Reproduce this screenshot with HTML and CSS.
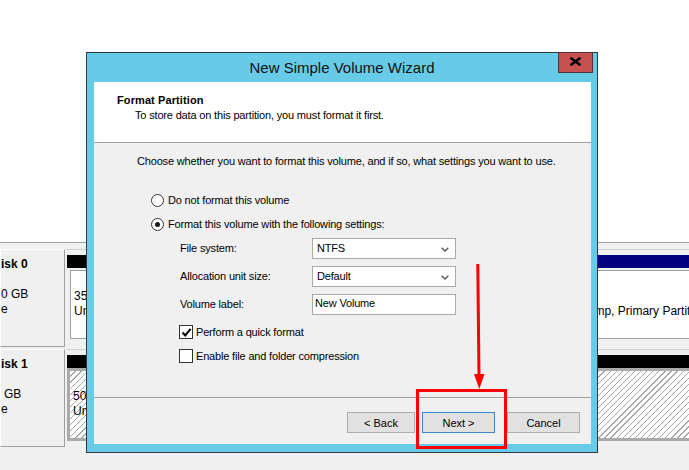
FILE: index.html
```html
<!DOCTYPE html>
<html>
<head>
<meta charset="utf-8">
<title>New Simple Volume Wizard</title>
<link rel="stylesheet" href="styles.css">
</head>
<body>
<div class="desk">
  <div class="vol-pane"></div>
  <div class="disk-pane">
    <div class="disk-row">
      <div class="disk-label">
        <div class="dl-name">isk 0</div>
        <div class="dl-line"></div>
        <div class="dl-line">0 GB</div>
        <div class="dl-line">e</div>
      </div>
      <div class="parts">
        <div class="part part-a">
          <div class="bar bar-black"></div>
          <div class="pframe"><div class="pinner"><div>35.00 GB</div><div>Unallocated</div></div></div>
        </div>
        <div class="part part-b">
          <div class="bar bar-navy"></div>
          <div class="pframe"><div class="pinner"><div>40.00 GB NTFS</div><div>Healthy (Boot, Page File, Crash Dump, Primary Partition)</div></div></div>
        </div>
      </div>
    </div>
    <div class="disk-row">
      <div class="disk-label">
        <div class="dl-name">isk 1</div>
        <div class="dl-line"></div>
        <div class="dl-line dl-indent">GB</div>
        <div class="dl-line">e</div>
      </div>
      <div class="parts">
        <div class="part part-full">
          <div class="bar bar-black"></div>
          <div class="hatch"><div>50.00 GB</div><div>Unallocated</div></div>
        </div>
      </div>
    </div>
  </div>
</div>

<div class="window">
  <div class="titlebar">New Simple Volume Wizard</div>
  <div class="close-btn">
    <svg width="13" height="9" viewBox="0 0 13 9"><path d="M1.5 0.8 L11.5 8.2 M11.5 0.8 L1.5 8.2" stroke="#000" stroke-width="2.6" fill="none"/></svg>
  </div>
  <div class="client">
    <div class="hdr">
      <div class="hdr-title">Format Partition</div>
      <div class="hdr-sub">To store data on this partition, you must format it first.</div>
    </div>
    <div class="body">
      <div class="intro">Choose whether you want to format this volume, and if so, what settings you want to use.</div>
      <div class="radios">
        <div class="opt"><span class="radio"></span>Do not format this volume</div>
        <div class="opt"><span class="radio radio-on"></span>Format this volume with the following settings:</div>
      </div>
      <div class="fields">
        <div class="frow">
          <div class="flabel">File system:</div>
          <div class="select"><span>NTFS</span><svg class="chev" width="8" height="5" viewBox="0 0 8 5"><path d="M0.7 0.7 L4 4 L7.3 0.7" stroke="#555" stroke-width="1.4" fill="none"/></svg></div>
        </div>
        <div class="frow">
          <div class="flabel">Allocation unit size:</div>
          <div class="select"><span>Default</span><svg class="chev" width="8" height="5" viewBox="0 0 8 5"><path d="M0.7 0.7 L4 4 L7.3 0.7" stroke="#555" stroke-width="1.4" fill="none"/></svg></div>
        </div>
        <div class="frow">
          <div class="flabel">Volume label:</div>
          <div class="textbox">New Volume</div>
        </div>
      </div>
      <div class="checks">
        <div class="opt"><span class="check"><svg width="11" height="11" viewBox="0 0 11 11"><path d="M1.5 5.5 L4.2 8.4 L9.6 1.8" stroke="#000" stroke-width="2" fill="none"/></svg></span>Perform a quick format</div>
        <div class="opt"><span class="check"></span>Enable file and folder compression</div>
      </div>
    </div>
    <div class="footer">
      <div class="btn btn-back">&lt; Back</div>
      <div class="btn btn-next">Next &gt;</div>
      <div class="btn btn-cancel">Cancel</div>
    </div>
  </div>
</div>

<svg class="annot" width="689" height="470" viewBox="0 0 689 470">
  <rect x="417.5" y="390.5" width="88" height="57" fill="none" stroke="#ff0000" stroke-width="3"/>
  <path d="M477.8 264 L479 377" stroke="#ff0000" stroke-width="3" fill="none"/>
  <polygon points="474,374 484.5,374 479.3,389" fill="#ff0000"/>
</svg>
</body>
</html>
```

FILE: styles.css
```css
* { box-sizing: border-box; margin: 0; padding: 0; }
html, body { width: 689px; height: 470px; overflow: hidden; }
body {
  background: #f0f0f0;
  font-family: "Liberation Sans", Arial, sans-serif;
  font-size: 11px;
  color: #000;
  position: relative;
}

/* background: disk management */
.vol-pane { height: 242px; background: #fff; }
.disk-pane { border-top: 1px solid #a0a0a0; padding-top: 6px; }
.disk-row { display: flex; height: 98px; margin-bottom: 2px; }
.disk-label {
  width: 65px;
  border: 1px solid;
  border-color: #ffffff #a0a0a0 #a0a0a0 #ffffff;
  padding-top: 7px;
  font-size: 12px;
  line-height: 15px;
  white-space: nowrap;
  overflow: hidden;
}
.dl-name { font-weight: bold; height: 15px; }
.dl-line { height: 15px; }
.dl-indent { padding-left: 3px; }
.parts {
  flex: 1;
  margin-left: 2px;
  display: flex;
  padding: 5px 0 6px;
  border-top: 1px solid #d0d0d0;
  overflow: hidden;
}
.part { display: flex; flex-direction: column; font-size: 12px; line-height: 15px; white-space: nowrap; overflow: hidden; }
.part-a { width: 333px; }
.part-b { flex: 1; }
.part-full { flex: 1; }
.bar { height: 13px; flex: none; }
.bar-black { background: #000; }
.bar-navy { background: #000080; }
.pframe { flex: 1; display: flex; padding: 2px 0 2px 3px; background: #f0f0f0; }
.pinner { flex: 1; background: #fff; border: 1px solid #a0a0a0; padding: 18px 0 0 3px; }
.hatch {
  flex: 1;
  border: 3px solid #aaaaaa;
  border-right: none;
  padding: 18px 0 0 3px;
  background: repeating-linear-gradient(-45deg, #ffffff 0 3.4px, #a8a8a8 3.4px 4.3px);
}

/* wizard window */
.window {
  position: absolute;
  left: 86px;
  top: 52px;
  width: 512px;
  height: 401px;
  border: 1px solid #2f3a40;
  background: #67cbe8;
  padding: 0 6px 8px 7px;
  display: flex;
  flex-direction: column;
}
.titlebar {
  height: 29px;
  margin: 0 -6px 0 -7px;
  text-align: center;
  line-height: 30px;
  font-size: 15px;
  color: #111;
  flex: none;
}
.close-btn {
  position: absolute;
  top: -1px;
  right: 4px;
  width: 35px;
  height: 21px;
  background: #c75050;
  border: 1px solid #4a3434;
  display: flex;
  align-items: center;
  justify-content: center;
  padding-bottom: 2px;
}
.close-btn svg { display: block; }
.client {
  flex: 1;
  background: #f0f0f0;
  display: flex;
  flex-direction: column;
  letter-spacing: -0.17px;
}
.hdr {
  height: 61px;
  background: #fff;
  border-bottom: 1px solid #a0a0a0;
  padding: 11px 0 0 23px;
  line-height: 15px;
  flex: none;
}
.hdr-title { font-weight: bold; letter-spacing: 0.1px; }
.hdr-sub { padding-left: 18px; }
.body { flex: 1; padding: 11px 0 0 43px; line-height: 15px; }
.radios { margin-top: 19px; margin-left: 14px; }
.opt { display: flex; align-items: center; white-space: nowrap; }
.radios .opt { height: 24px; }
.radio {
  width: 13px; height: 13px;
  border: 1px solid #333;
  border-radius: 50%;
  background: #fff;
  margin-right: 4px;
  display: flex; align-items: center; justify-content: center;
}
.radio-on::after {
  content: "";
  width: 5px; height: 5px;
  border-radius: 50%;
  background: #1a1a1a;
}
.fields { margin: 2px 0 0 43px; }
.frow { display: flex; align-items: center; height: 21px; margin-bottom: 7px; }
.frow:last-child { margin-bottom: 0; }
.flabel { width: 132px; }
.select, .textbox {
  width: 144px;
  height: 21px;
  background: #fff;
  border: 1px solid #a9a9a9;
}
.select { display: flex; align-items: center; justify-content: space-between; padding: 0 6px 0 4px; }
.chev { display: block; margin-top: 1px; }
.textbox { padding: 1px 0 0 2px; }
.checks { margin: 5px 0 0 42px; }
.checks .opt { height: 24px; }
.check {
  width: 14px; height: 14px;
  border: 1px solid #333;
  background: #fff;
  margin-right: 3px;
  display: flex; align-items: center; justify-content: center;
}
.check svg { display: block; }
.footer {
  height: 47px;
  border-top: 1px solid #a0a0a0;
  display: flex;
  justify-content: flex-end;
  padding: 14px 11px 0 0;
  flex: none;
}
.btn {
  height: 21px;
  background: #e1e1e1;
  border: 1px solid #adadad;
  display: flex;
  align-items: center;
  justify-content: center;
  letter-spacing: 0;
}
.btn-back { width: 68px; margin-right: 7px; }
.btn-next { width: 73px; margin-right: 12px; border-color: #3d86c9; }
.btn-cancel { width: 73px; }

/* annotation overlay */
.annot { position: absolute; left: 0; top: 0; pointer-events: none; }
```
